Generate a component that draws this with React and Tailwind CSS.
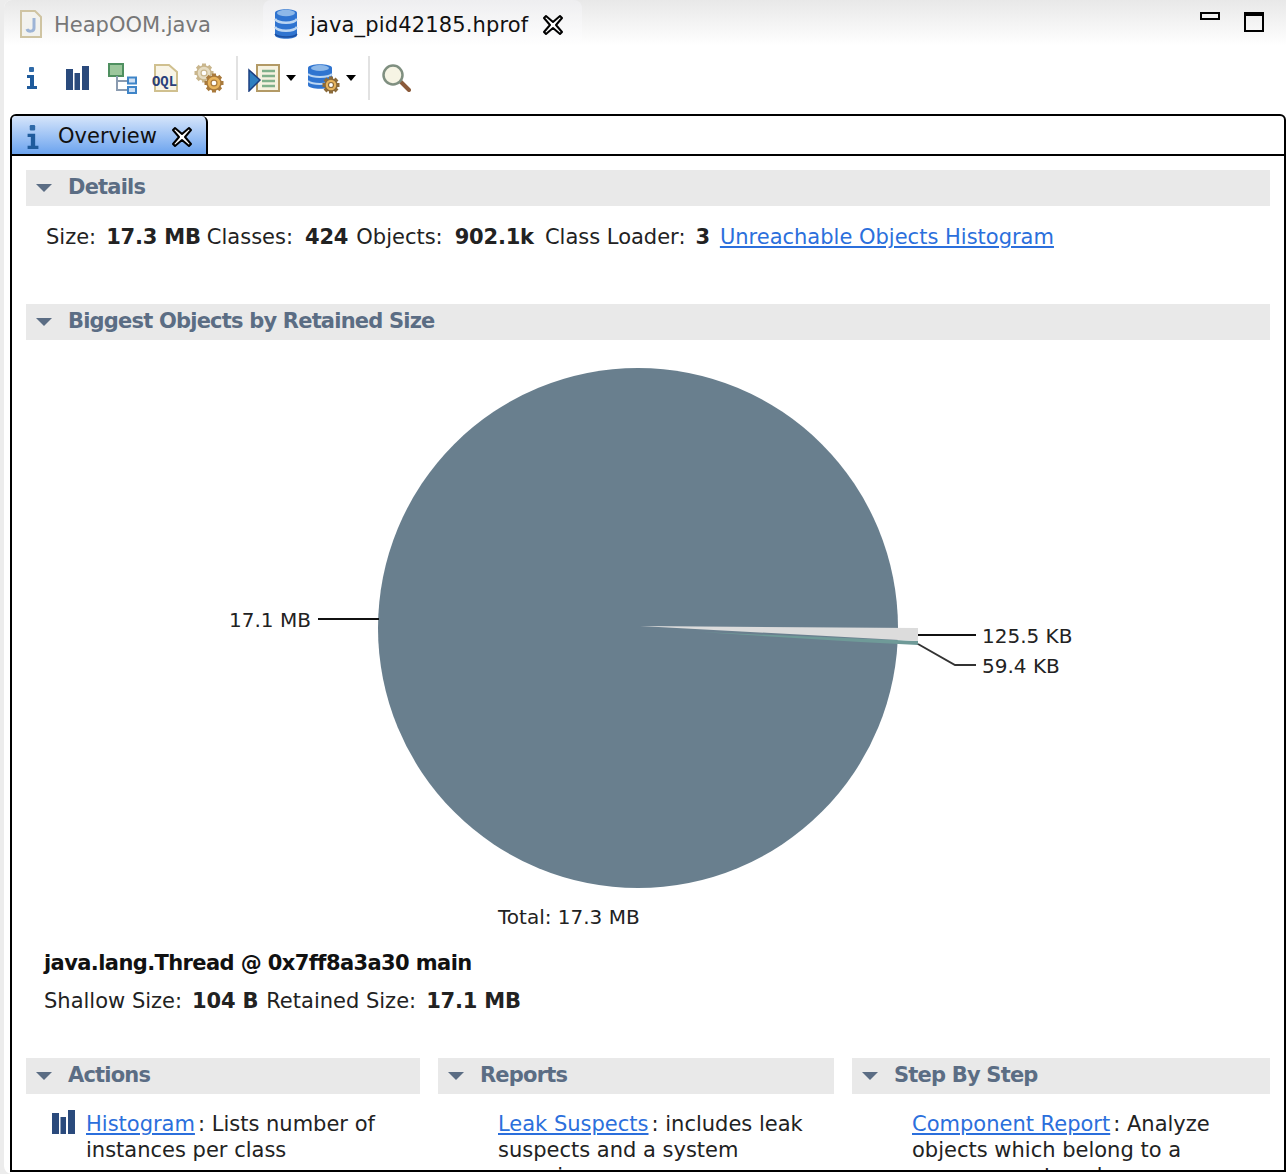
const font = "font-['DejaVu_Sans',sans-serif]"

function CloseIcon({ className = '' }) {
  return (
    <svg width="22" height="22" viewBox="0 0 22 22" className={className}>
      <path d="M4 2 L11 8 L18 2 L20 4 L14 11 L20 18 L18 20 L11 14 L4 20 L2 18 L8 11 L2 4 Z" fill="#fff" stroke="#000" strokeWidth="2" strokeLinejoin="round" />
    </svg>
  )
}

function InfoIcon({ size = 24 }) {
  return (
    <svg width={size} height={size} viewBox="0 0 24 24">
      <rect x="9" y="1" width="5" height="5" rx="1" fill="#2f6aa8" />
      <path d="M7 9 H14 V20 H17 V23 H7 V20 H10 V12 H7 Z" fill="#1f5b9c" />
    </svg>
  )
}

function BarsIcon({ width = 23, height = 24 }) {
  return (
    <svg width={width} height={height} viewBox="0 0 23 24">
      <rect x="0" y="3" width="7" height="21" fill="#2a4a7c" />
      <rect x="8.5" y="7" width="5.5" height="17" fill="#2a4a7c" />
      <rect x="16" y="0" width="7" height="24" fill="#2a4a7c" />
    </svg>
  )
}

function TreeIcon() {
  return (
    <svg width="29" height="31" viewBox="0 0 29 31" className="block">
      <rect x="1" y="1" width="14" height="12" fill="#9cc79c" stroke="#4f9060" strokeWidth="2" />
      <path d="M9 13 V27 H20 M9 18 H20" fill="none" stroke="#8a9bb0" strokeWidth="2" />
      <rect x="20" y="14.5" width="8" height="6" fill="#cfe0f4" stroke="#3f85c8" strokeWidth="2" />
      <rect x="20" y="24" width="8" height="6" fill="#cfe0f4" stroke="#3f85c8" strokeWidth="2" />
    </svg>
  )
}

function OqlIcon() {
  return (
    <svg width="27" height="28" viewBox="0 0 27 28" className="block">
      <path d="M4 1 H18 L26 8 V27 H4 Z" fill="#f8f4e6" stroke="#d0c08f" strokeWidth="2" />
      <text x="1" y="22" fontSize="14" fontWeight="700" textLength="25" lengthAdjust="spacingAndGlyphs" fontFamily="Liberation Mono, monospace" fill="#2b3f7a">OQL</text>
    </svg>
  )
}

function Gear({ cx, cy, r, fill, stroke }) {
  const teeth = [0, 45, 90, 135, 180, 225, 270, 315]
  return (
    <g>
      {teeth.map(a => (
        <rect key={a} x={cx - 2} y={cy - r - 2.5} width="4" height="5" fill={stroke} transform={`rotate(${a} ${cx} ${cy})`} />
      ))}
      <circle cx={cx} cy={cy} r={r} fill={fill} stroke={stroke} strokeWidth="1.5" />
      <circle cx={cx} cy={cy} r={r * 0.42} fill="#fff" stroke={stroke} strokeWidth="1.2" />
    </g>
  )
}

function GearsIcon() {
  return (
    <svg width="30" height="30" viewBox="0 0 30 30" className="block">
      <Gear cx={10} cy={10} r={7} fill="#e6dcc2" stroke="#c9b68d" />
      <Gear cx={20} cy={20} r={7} fill="#e8b45c" stroke="#a97a3c" />
    </svg>
  )
}

function DbIcon() {
  return (
    <svg width="24" height="32" viewBox="0 0 24 32" className="block">
      <path d="M1 5 C1 0 23 0 23 5 V27 C23 32 1 32 1 27 Z" fill="#2f74d0" />
      <ellipse cx="12" cy="5" rx="9" ry="3.2" fill="#8db8e8" />
      <path d="M1 11 C4 16 20 16 23 11 M1 19 C4 24 20 24 23 19" fill="none" stroke="#bcd6f2" strokeWidth="2.5" />
      <path d="M1 26 C4 30 20 30 23 26" fill="none" stroke="#1c4fa0" strokeWidth="1.5" />
    </svg>
  )
}

function JavaFileIcon() {
  return (
    <svg width="22" height="28" viewBox="0 0 22 28" className="block">
      <path d="M1 1 H15 L21 7 V27 H1 Z" fill="#f2f2ee" stroke="#cfc4a2" strokeWidth="2" />
      <path d="M14 8 V18 C14 22 8 22 7 19" fill="none" stroke="#9db4d6" strokeWidth="3" />
    </svg>
  )
}

function RunListIcon() {
  return (
    <svg width="32" height="28" viewBox="0 0 32 28" className="block">
      <rect x="9" y="1" width="22" height="26" fill="#f6f2e0" stroke="#b39a66" strokeWidth="2" />
      <path d="M14 7 H27 M14 12 H27 M14 17 H27 M14 22 H27" stroke="#7fb08a" strokeWidth="2.5" />
      <path d="M1 6 L12 16 L1 27 Z" fill="#2f7fc0" stroke="#1d3f80" strokeWidth="1.5" />
    </svg>
  )
}

function DbGearIcon() {
  return (
    <svg width="32" height="31" viewBox="0 0 32 31" className="block">
      <path d="M0 5 C0 0 24 0 24 5 V22 C24 27 0 27 0 22 Z" fill="#2f74d0" />
      <ellipse cx="12" cy="5" rx="9" ry="3" fill="#8db8e8" />
      <path d="M0 11 C4 15 20 15 24 11 M0 18 C4 22 20 22 24 18" fill="none" stroke="#bcd6f2" strokeWidth="2" />
      <Gear cx={23} cy={22} r={6} fill="#e8b45c" stroke="#8a6a3a" />
    </svg>
  )
}

function SearchIcon() {
  return (
    <svg width="29" height="28" viewBox="0 0 29 28" className="block">
      <line x1="17" y1="16" x2="27" y2="26" stroke="#8a5a3a" strokeWidth="4" strokeLinecap="round" />
      <circle cx="11" cy="11" r="9.5" fill="#f6f4e4" stroke="#7f8f80" strokeWidth="2.5" />
    </svg>
  )
}

function Caret({ className = '' }) {
  return <span className={`block w-0 h-0 border-x-[5px] border-x-transparent border-t-[6px] border-t-black ${className}`} />
}

function Divider() {
  return <span className="block w-[2px] h-11 bg-[#e2e2e2]" />
}

function SectionHeader({ title, className = '' }) {
  return (
    <div className={`h-9 bg-[#e9e9e9] flex items-center ${className}`}>
      <span className="ml-[10px] mr-[16px] w-0 h-0 border-x-[8px] border-x-transparent border-t-[8px] border-t-[#5b6d84]" />
      <span className="text-[21px] font-bold text-[#5b6d84] tracking-[-0.8px]">{title}</span>
    </div>
  )
}

function Stat({ label, value, className = 'ml-[10px] mr-2' }) {
  return (
    <>
      <span>{label}</span>
      <b className={`font-bold tracking-[-0.2px] ${className}`}>{value}</b>
    </>
  )
}

function ReportColumn({ title, link, lines, className, icon }) {
  return (
    <div className={className}>
      <SectionHeader title={title} />
      <div className="relative mt-[17px] text-[21px] leading-[26px] text-[#222]">
        {icon && <div className="absolute left-[26px] top-[-1px]">{icon}</div>}
        <p className="pl-[60px] whitespace-nowrap">
          <a className="text-[#2b6fdc] underline">{link}</a>
          <span className="ml-[3px]">:</span> {lines[0]}
          <br />
          {lines[1]}
          <br />
          {lines[2]}
        </p>
      </div>
    </div>
  )
}

function Pie() {
  return (
    <svg width="1244" height="590" viewBox="26 340 1244 590" className="block" fontFamily="DejaVu Sans, sans-serif" fontSize="20" fill="#222">
      <circle cx="638" cy="628" r="260" fill="#697f8e" />
      <path d="M700 632 L918 641 L918 645 L860 642 Z" fill="#6f9a98" />
      <path d="M640 626 L918 628 L918 641 Z" fill="#dcdcdc" />
      <path d="M318 619 H379" stroke="#111" strokeWidth="2" fill="none" />
      <path d="M918 635 H976" stroke="#111" strokeWidth="2" fill="none" />
      <path d="M918 644 L955 665 H976" stroke="#333" strokeWidth="2" fill="none" />
      <text x="229" y="627">17.1 MB</text>
      <text x="982" y="643">125.5 KB</text>
      <text x="982" y="673">59.4 KB</text>
      <text x="498" y="924">Total: 17.3 MB</text>
    </svg>
  )
}

export default function App() {
  return (
    <div className={`relative w-[1286px] h-[1174px] overflow-hidden bg-[#ececec] ${font}`}>
      <div className="h-full ml-[4px] bg-white rounded-l-lg overflow-hidden flex flex-col">
        {/* editor tabs */}
        <div className="h-[46px] shrink-0 flex items-stretch bg-gradient-to-b from-[#e8e8e8] to-white">
          <div className="w-[259px] flex items-center pl-[16px] pt-[2px] gap-[12px]">
            <JavaFileIcon />
            <span className="mt-[3px] text-[21px] text-[#777]">HeapOOM.java</span>
          </div>
          <div className="w-[319px] flex items-center pl-[11px] pt-[2px] rounded-t-lg bg-gradient-to-b from-[#eeeef0] to-white">
            <DbIcon />
            <span className="mt-[3px] ml-[12px] text-[21px] text-[#111] tracking-[0.15px]">java_pid42185.hprof</span>
            <CloseIcon className="ml-[14px] mt-[1px]" />
          </div>
          <div className="ml-auto flex items-start pt-[12px] pr-[22px] gap-[24px]">
            <span className="w-5 h-2 border-2 border-black" />
            <span className="w-5 h-5 border-2 border-black border-t-[4px]" />
          </div>
        </div>

        {/* toolbar */}
        <div className="h-[64px] mb-[4px] shrink-0 flex items-center pl-[16px]">
          <InfoIcon />
          <span className="ml-[22px]"><BarsIcon /></span>
          <span className="ml-[19px]"><TreeIcon /></span>
          <span className="ml-[14px]"><OqlIcon /></span>
          <span className="ml-[16px]"><GearsIcon /></span>
          <span className="ml-[12px] mr-[10px]"><Divider /></span>
          <RunListIcon />
          <Caret className="ml-[6px] mr-[12px]" />
          <DbGearIcon />
          <Caret className="ml-[6px] mr-[12px]" />
          <Divider />
          <span className="ml-[12px]"><SearchIcon /></span>
        </div>

        {/* overview panel */}
        <div className="ml-[6px] h-[1058px] shrink-0 border-2 border-black rounded-t-md overflow-hidden flex flex-col">
          <div className="h-[40px] shrink-0 border-b-2 border-black flex items-stretch">
            <div className="w-[196px] border-r-2 border-black rounded-tr-md flex items-center bg-gradient-to-b from-[#d6e5fa] to-[#6ba3ee] pl-[8px] pt-[4px]">
              <InfoIcon size={26} />
              <span className="ml-[12px] text-[21px] text-[#111]">Overview</span>
              <CloseIcon className="ml-[14px]" />
            </div>
          </div>

          <div className="flex-1 min-h-0 px-[14px] pt-[14px]">
            <SectionHeader title="Details" />
            <div className="h-[64px] pl-[20px] flex items-center text-[21px] text-[#222] whitespace-nowrap">
              <Stat label="Size:" value="17.3 MB" className="ml-[10px] mr-[6px]" />
              <Stat label="Classes:" value="424" className="ml-[12px] mr-2" />
              <Stat label="Objects:" value="902.1k" className="ml-[12px] mr-[11px]" />
              <Stat label="Class Loader:" value="3" className="ml-[10px] mr-[10px]" />
              <a className="text-[#2b6fdc] underline">Unreachable Objects Histogram</a>
            </div>

            <SectionHeader title="Biggest Objects by Retained Size" className="mt-[34px]" />
            <Pie />

            <div className="pl-[18px] text-[21px] text-[#222] whitespace-nowrap">
              <p className="font-bold text-[#111] leading-[26px] mt-[20px] tracking-[-0.6px]">java.lang.Thread @ 0x7ff8a3a30 main</p>
              <div className="mt-[12px] leading-[26px]">
                <Stat label="Shallow Size:" value="104 B" />
                <Stat label="Retained Size:" value="17.1 MB" />
              </div>
            </div>

            <div className="mt-[44px] flex gap-[18px]">
              <ReportColumn
                className="w-[394px] shrink-0"
                title="Actions"
                link="Histogram"
                icon={<BarsIcon />}
                lines={['Lists number of', 'instances per class', '']}
              />
              <ReportColumn
                className="w-[396px] shrink-0"
                title="Reports"
                link="Leak Suspects"
                lines={['includes leak', 'suspects and a system', 'overview']}
              />
              <ReportColumn
                className="w-[418px] shrink-0"
                title="Step By Step"
                link="Component Report"
                lines={['Analyze', 'objects which belong to a', 'common root package']}
              />
            </div>
          </div>
        </div>
      </div>
    </div>
  )
}
